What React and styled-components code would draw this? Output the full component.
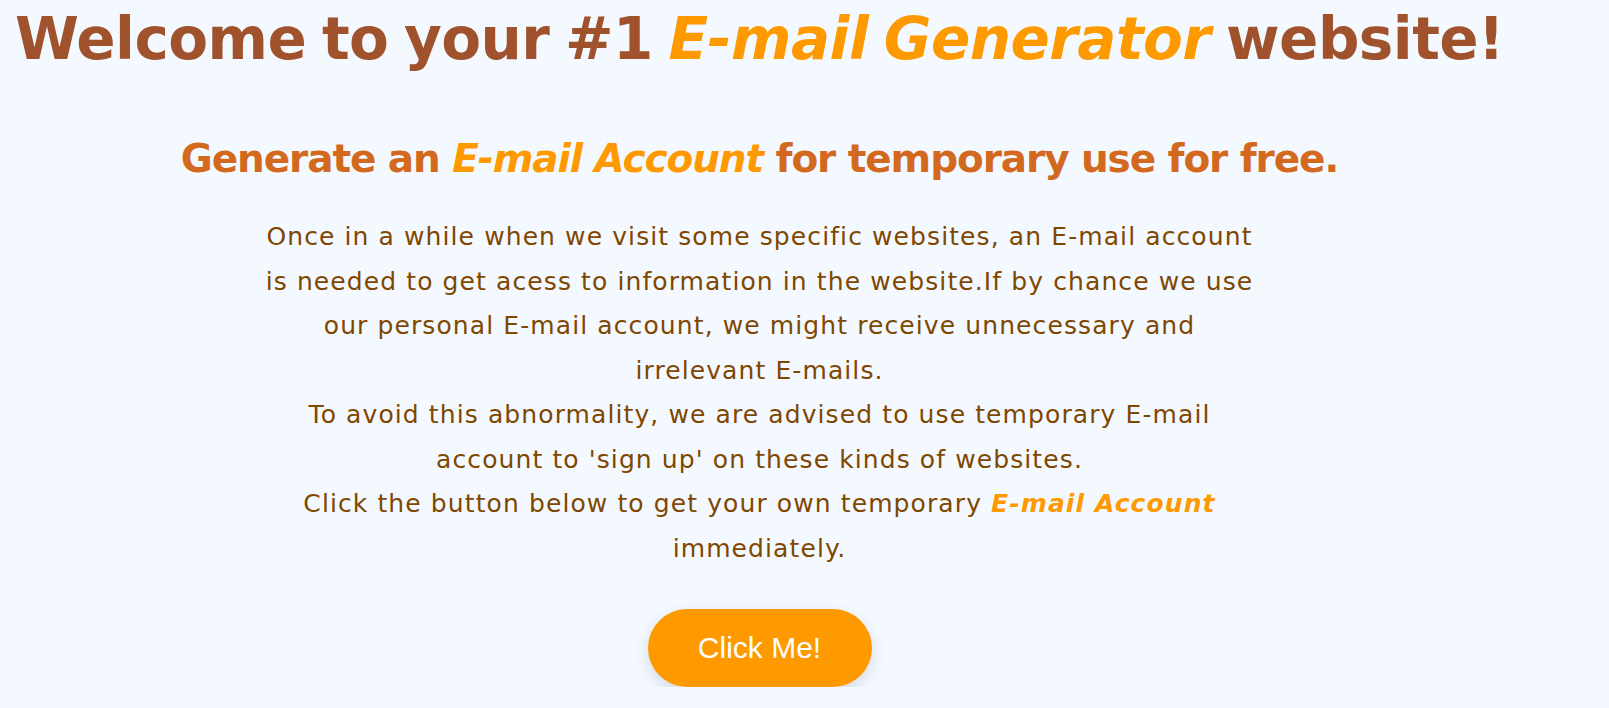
import React from "react";
import styled, { createGlobalStyle } from "styled-components";

const Global = createGlobalStyle`
  html, body {
    margin: 0;
    padding: 0;
    background: #f3f9ff;
  }
  body {
    font-family: "DejaVu Sans", "Noto Sans", sans-serif;
  }
`;

const Page = styled.main`
  width: 1519px;
  padding-top: 4px;
  display: flex;
  flex-direction: column;
  align-items: center;
  text-align: center;
`;

const Title = styled.h1`
  margin: 0;
  font-size: 58px;
  line-height: 70px;
  font-weight: 700;
  letter-spacing: -0.55px;
  word-spacing: -4px;
  color: #a0522d;
  white-space: nowrap;
`;

const Accent = styled.em`
  font-style: italic;
  color: #ff9900;
  font-weight: 700;
`;

const Subtitle = styled.h2`
  margin: 60px 0 0;
  font-size: 39px;
  line-height: 50px;
  font-weight: 700;
  letter-spacing: -1.1px;
  color: #d2691e;
  white-space: nowrap;
`;

const Text = styled.p`
  margin: 31px 0 0;
  font-size: 25px;
  line-height: 44.5px;
  letter-spacing: 1.1px;
  color: #7f4700;
`;

const Line = styled.span`
  display: block;
  white-space: nowrap;
`;

const Button = styled.button`
  margin-top: 38px;
  width: 224px;
  height: 78px;
  border: none;
  border-radius: 39px;
  background: #ff9900;
  color: #fff;
  font-family: "Liberation Sans", Arial, sans-serif;
  font-size: 30px;
  cursor: pointer;
  box-shadow: 0 6px 16px rgba(0, 0, 0, 0.12);
`;

const lines = [
  "Once in a while when we visit some specific websites, an E-mail account",
  "is needed to get acess to information in the website.If by chance we use",
  "our personal E-mail account, we might receive unnecessary and",
  "irrelevant E-mails.",
  "To avoid this abnormality, we are advised to use temporary E-mail",
  "account to 'sign up' on these kinds of websites.",
];

export default function App() {
  return (
    <>
      <Global />
      <Page>
        <Title>
          Welcome to your #1 <Accent>E-mail Generator</Accent> website!
        </Title>
        <Subtitle>
          Generate an <Accent>E-mail Account</Accent> for temporary use for free.
        </Subtitle>
        <Text>
          {lines.map((l) => (
            <Line key={l}>{l}</Line>
          ))}
          <Line>
            Click the button below to get your own temporary <Accent>E-mail Account</Accent>
          </Line>
          <Line>immediately.</Line>
        </Text>
        <Button>Click Me!</Button>
      </Page>
    </>
  );
}
